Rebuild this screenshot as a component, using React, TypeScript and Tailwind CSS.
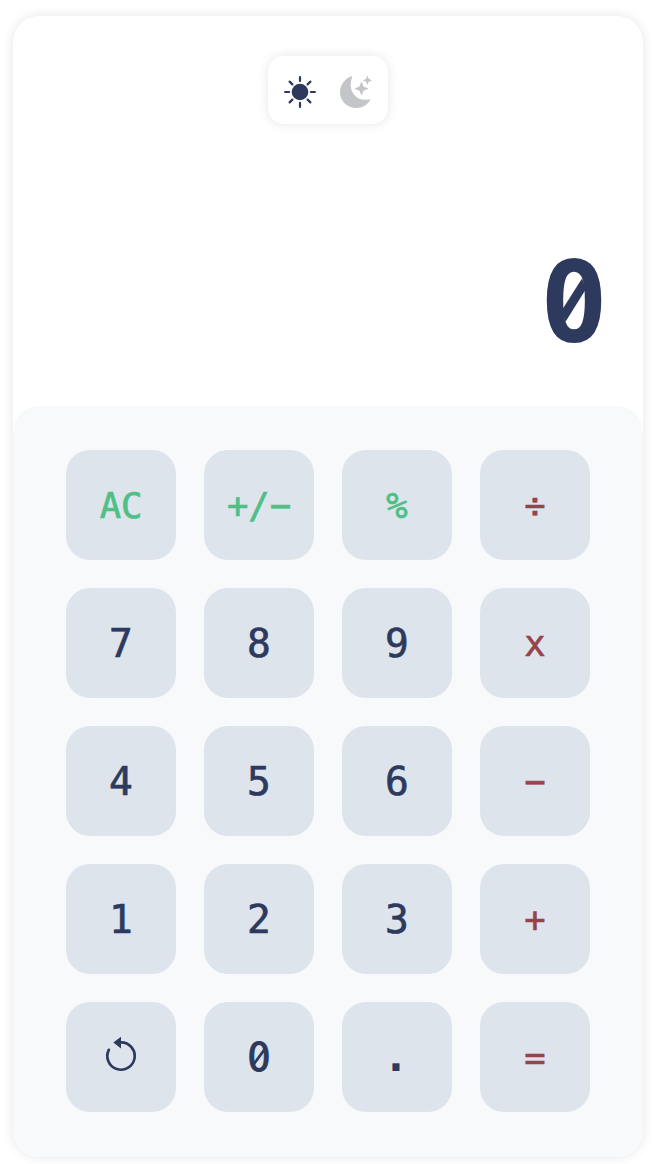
import React from "react";

type Key = { label: string; tone: string };
const green = "text-[#4fbf86] text-[35.5px] [-webkit-text-stroke:0.7px_#4fbf86] pt-0.5";
const red = "text-[#96434b] text-[35.5px] [-webkit-text-stroke:0.6px_#96434b] pt-0.5";
const navy = "text-[#2d3a5d] text-[39.5px] [-webkit-text-stroke:0.7px_#2d3a5d] pt-0.5";
const zero = "text-[#2d3a5d] text-[39px] [-webkit-text-stroke:1px_#2d3a5d] pt-[3px]";
const dot = "text-[#2d3a5d] text-[43px] font-bold pr-0.5 pb-0.5";

const keys: Key[] = [
  { label: "AC", tone: green }, { label: "+/−", tone: green }, { label: "%", tone: green }, { label: "÷", tone: red },
  { label: "7", tone: navy }, { label: "8", tone: navy }, { label: "9", tone: navy }, { label: "x", tone: red },
  { label: "4", tone: navy }, { label: "5", tone: navy }, { label: "6", tone: navy }, { label: "−", tone: red },
  { label: "1", tone: navy }, { label: "2", tone: navy }, { label: "3", tone: navy }, { label: "+", tone: red },
  { label: "reset", tone: navy }, { label: "0", tone: zero }, { label: ".", tone: dot }, { label: "=", tone: red },
];

function Sun() {
  return (
    <svg className="size-8 text-[#2d3a5d]" viewBox="0 0 32 32" fill="currentColor" aria-hidden="true">
      <circle cx="16" cy="16" r="8.3" />
      <path
        d="M16 1.1v4M16 26.900v4M1.100 16h4M26.900 16h4M5.600 5.600l2.800 2.800M23.600 23.600l2.800 2.800M5.600 26.400l2.800-2.800M23.600 8.400l2.800-2.800"
        stroke="currentColor" strokeWidth="2.200" strokeLinecap="round"
      />
    </svg>
  );
}

function Moon() {
  return (
    <svg className="size-8 text-[#c4c5c9]" viewBox="0 0 32 32" fill="currentColor" aria-hidden="true">
      <path d="M11 .4c.8-.3 1.4.4 1 1.200A18 18 0 0 0 10.700 9c0 8.300 6.200 14.800 14.200 14.800 1.300 0 2.600-.1 3.800-.4 1-.2 1.600.6 1.100 1.400A16.300 16.300 0 0 1 16.200 32C7.200 32 0 25 0 16.200 0 9.300 4.400 2.800 11 .4z" />
      <path d="M21.500 6.100c.3 0 .5.200.6.500l1 3c.2.700.8 1.200 1.400 1.400l3 1c.6.200.6 1 0 1.200l-3 1c-.7.200-1.200.8-1.400 1.400l-1 3c-.2.600-1 .6-1.200 0l-1-3c-.2-.7-.8-1.200-1.400-1.400l-3-1c-.6-.2-.6-1 0-1.200l3-1c.7-.2 1.200-.8 1.400-1.400l1-3c.1-.3.3-.5.600-.5z" />
      <path d="M27.400 0c.2 0 .4.100.4.300l.7 2c.1.400.5.800.9.900l2 .7c.4.100.4.700 0 .8l-2 .7c-.4.100-.8.500-.9.900l-.7 2c-.1.400-.7.400-.8 0l-.7-2c-.1-.4-.5-.8-.9-.9l-2-.7c-.4-.1-.4-.7 0-.8l2-.7c.4-.1.800-.5.900-.9l.7-2c.1-.2.2-.3.400-.3z" />
    </svg>
  );
}

function Reset() {
  return (
    <svg className="mb-2 h-9 w-8 text-[#2d3a5d]" viewBox="0 0 32 36" aria-hidden="true">
      <path d="M16 6.300A13.700 13.700 0 1 1 3.800 13.800" fill="none" stroke="currentColor" strokeWidth="2.700" strokeLinecap="round" />
      <path d="M16 .7v11.800L8.300 6.400z" fill="currentColor" />
    </svg>
  );
}

export default function App() {
  return (
    <div className="h-[1164px] w-[658px] bg-white pl-[13px] pt-4 font-['DejaVu_Sans_Mono',monospace]">
      <main className="flex h-[1141px] w-[630px] flex-col rounded-[26px] bg-white shadow-[0_0_12px_rgba(0,0,0,0.1)]">
        <div className="flex h-[390px] flex-col items-center pt-10">
          <div className="flex h-[68px] w-[120px] items-center justify-center gap-6 rounded-2xl pt-1 shadow-[0_0_12px_rgba(0,0,0,0.1)]">
            <Sun />
            <Moon />
          </div>
          <div className="relative mr-[35px] mt-[109px] self-end text-[113px] font-bold leading-[138px] text-[#2d3a5d]">
            0
            <svg className="absolute left-0 top-0 h-[138px] w-[68px]" viewBox="540 233 68 138" aria-hidden="true">
              <rect x="565.500" y="288" width="17.500" height="23" fill="#fff" />
              <path d="M562 310L582 278.500L586 289L565.500 321.800z" fill="currentColor" />
            </svg>
          </div>
        </div>
        <div className="grid flex-1 grid-cols-4 content-start gap-7 rounded-[26px] bg-[#f7f9fb] px-[53px] pt-11">
          {keys.map((k) => (
            <button
              key={k.label + k.tone}
              aria-label={k.label}
              className={`relative flex size-[110px] items-center justify-center rounded-3xl bg-[#dde4ec] ${k.tone}`}
            >
              {k.label === "reset" ? <Reset /> : k.label}
              {k.label === "0" && (
                <svg className="absolute inset-0 size-[110px]" viewBox="0 0 110 110" aria-hidden="true">
                  <rect x="51.500" y="49" width="7" height="12" fill="#dde4ec" />
                  <path d="M49.500 62.500L60.500 47.500" stroke="currentColor" strokeWidth="2.800" />
                </svg>
              )}
            </button>
          ))}
        </div>
      </main>
    </div>
  );
}
